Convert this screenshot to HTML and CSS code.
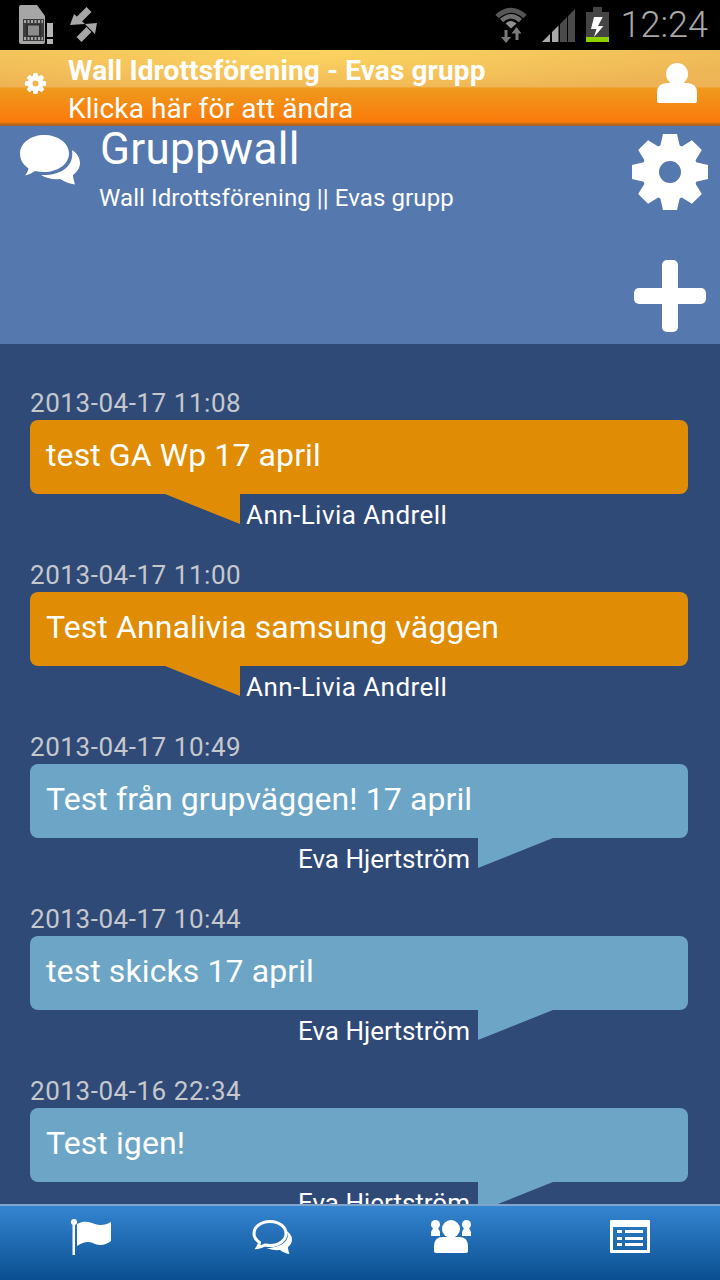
FILE: index.html
```html
<!DOCTYPE html>
<html lang="en">

<head>
  <meta charset="UTF-8" />
  <title>Gruppwall</title>
  <link rel="stylesheet" href="styles.css">
</head>

<body>
  <svg class="defs" width="0" height="0">
    <symbol id="gear" viewBox="-38 -38 76 76">
      <circle r="19.5" fill="none" stroke="#fff" stroke-width="17" />
      <g fill="#fff">
        <path id="tooth" d="M-7 -38H7L10 -25H-10Z" />
        <use href="#tooth" transform="rotate(45)" />
        <use href="#tooth" transform="rotate(90)" />
        <use href="#tooth" transform="rotate(135)" />
        <use href="#tooth" transform="rotate(180)" />
        <use href="#tooth" transform="rotate(225)" />
        <use href="#tooth" transform="rotate(270)" />
        <use href="#tooth" transform="rotate(315)" />
      </g>
    </symbol>
  </svg>

  <div class="status-bar">
    <svg class="ic-sim" viewBox="19 5 34 39">
      <path d="M21 5H37L45 16V42Q45 44 43 44H21Q19 44 19 42V7Q19 5 21 5Z" fill="#a6a6a6" />
      <rect x="23" y="19" width="21" height="22" fill="#3c3c3c" />
      <path d="M24 21.500H43M24 38.500H43" stroke="#a6a6a6" stroke-width="3" stroke-dasharray="2 1.500" fill="none" />
      <rect x="26" y="24" width="15" height="13" fill="#2e2e2e" />
      <rect x="28" y="25.500" width="11" height="10" fill="#8c8c8c" />
      <rect x="47" y="23" width="6" height="14" fill="#b5b5b5" />
      <rect x="47" y="39" width="6" height="5" fill="#b5b5b5" />
    </svg>
    <svg class="ic-sync" viewBox="70 6 28 36">
      <path d="M89 9.500L79 19.500M79 39.500L89 29.500" stroke="#a6a6a6" stroke-width="7" fill="none" />
      <path d="M70 25L74 14L85 24ZM97 23L85 24L95 34Z" fill="#a6a6a6" />
    </svg>
    <span class="spacer"></span>
    <svg class="ic-wifi" viewBox="495 7 32 37">
      <path d="M497 16.500Q511 4 525 16.500" stroke="#555" stroke-width="5" fill="none" />
      <path d="M501.500 20.500Q511 12 520.500 20.500" stroke="#6f6f6f" stroke-width="4.500" fill="none" />
      <path d="M505.500 23.500Q511 18.500 516.500 23.500L511 28.500Z" fill="#8e8e8e" />
      <path d="M504.500 30V37H501L506 43L511 37H507.500V30ZM515.500 40V33.500H511.500L516.500 27L521.500 33.500H518.500V40Z" fill="#7a7a7a" />
    </svg>
    <svg class="ic-signal" viewBox="542 9 33 33">
      <path d="M542 42L550 34V42ZM552 32V42H558.500V25.500Z" fill="#a8a8a8" />
      <path d="M560 24V42H567V17ZM568 16V42H575V9Z" fill="#4a4a4a" />
    </svg>
    <svg class="ic-batt" viewBox="586 7 23 35">
      <rect x="593" y="7" width="9" height="5" fill="#444" />
      <rect x="586" y="12" width="23" height="25" fill="#444" />
      <rect x="586" y="37" width="23" height="5" fill="#8fd000" />
      <path d="M594 17H602.700L598 26H603.500L594 37L596.500 29H591Z" fill="#fff" />
    </svg>
    <span class="clock">12:24</span>
  </div>

  <div class="notif-bar">
    <svg class="ic-notif-gear"><use href="#gear" /></svg>
    <div class="notif-text">
      <div class="notif-title">Wall Idrottsförening - Evas grupp</div>
      <div class="notif-sub">Klicka här för att ändra</div>
    </div>
    <svg class="ic-user" viewBox="657 63 40 40">
      <circle cx="677" cy="74" r="11" fill="#fff" />
      <path d="M667 83H687Q697 83 697 93V101Q697 103 695 103H659Q657 103 657 101V93Q657 83 667 83Z" fill="#fff" />
    </svg>
  </div>

  <div class="header">
    <svg class="ic-chat" viewBox="20 135 60 50">
      <path d="M44 135C58 135 69 143 69 153.500C69 164 58 172 44 172C41 172 38 171.700 35 171C32 173 29 175 25 175.500C27 173 28 171 28.500 168.500C23.500 165 20 160 20 153.500C20 143 31 135 44 135Z" fill="#fff" />
      <path d="M72 150C77 153 80 158 80 163C80 168 77 172 73 175C73 178 74 181 75 184.500C70 184 65 182 60 179C53 180 46 178 41 175C55 176 75 170 72 150Z" fill="#fff" />
    </svg>
    <div class="header-text">
      <h1>Gruppwall</h1>
      <p>Wall Idrottsförening || Evas grupp</p>
    </div>
    <div class="header-actions">
      <svg class="ic-gear"><use href="#gear" /></svg>
      <svg class="ic-plus" viewBox="0 0 72 72">
        <rect x="28" y="0" width="16" height="72" rx="5" fill="#fff" />
        <rect x="0" y="28" width="72" height="16" rx="5" fill="#fff" />
      </svg>
    </div>
  </div>

  <div class="wall">
    <div class="post mine">
      <div class="post-date">2013-04-17 11:08</div>
      <div class="bubble">test GA Wp 17 april</div>
      <div class="author">Ann-Livia Andrell</div>
    </div>
    <div class="post mine">
      <div class="post-date">2013-04-17 11:00</div>
      <div class="bubble">Test Annalivia samsung väggen</div>
      <div class="author">Ann-Livia Andrell</div>
    </div>
    <div class="post other">
      <div class="post-date">2013-04-17 10:49</div>
      <div class="bubble">Test från grupväggen! 17 april</div>
      <div class="author">Eva Hjertström</div>
    </div>
    <div class="post other">
      <div class="post-date">2013-04-17 10:44</div>
      <div class="bubble">test skicks 17 april</div>
      <div class="author">Eva Hjertström</div>
    </div>
    <div class="post other">
      <div class="post-date">2013-04-16 22:34</div>
      <div class="bubble">Test igen!</div>
      <div class="author">Eva Hjertström</div>
    </div>
  </div>

  <div class="tabs">
    <div class="tab">
      <svg class="ic-tab ic-flag" viewBox="71 1219 41 37">
        <circle cx="74" cy="1222" r="3" fill="#fff" />
        <rect x="72.500" y="1222" width="2.500" height="33" fill="#fff" />
        <path d="M77 1224C84 1220 90 1222 95 1224C100 1226 106 1225 111 1222V1241C106 1245 100 1246 95 1244C90 1241 84 1241 77 1246Z" fill="#fff" />
      </svg>
    </div>
    <div class="tab">
      <svg class="ic-tab" viewBox="252 1219 41 37">
        <path d="M270 1221.500C279 1221.500 286 1227 286 1233.500C286 1240 279 1245.500 270 1245.500C268 1245.500 266.500 1245.300 265 1245C262.500 1246.500 260 1247.300 257.500 1247.500C258.500 1246 259.300 1244 259.500 1242.500C256 1240 254 1237 254 1233.500C254 1227 261 1221.500 270 1221.500Z" fill="none" stroke="#fff" stroke-width="3" />
        <path d="M286.500 1231C290 1233 292 1236 292 1239.500C292 1242.500 290.500 1245 288 1247C288 1249 288.500 1251.500 289.500 1254C286 1253.500 282.500 1252 280 1250C275 1250.500 270 1249.500 266.500 1248C278 1248 292 1242 286.500 1231Z" fill="#fff" />
      </svg>
    </div>
    <div class="tab">
      <svg class="ic-tab" viewBox="431 1219 41 37">
        <circle cx="451" cy="1229" r="9" fill="#fff" />
        <path d="M443 1237H459Q468 1237 468 1246V1251Q468 1253 466 1253H436Q434 1253 434 1251V1246Q434 1237 443 1237Z" fill="#fff" />
        <circle cx="435.500" cy="1224.500" r="4.500" fill="#fff" />
        <path d="M433 1228H438L440 1232V1236H431V1232Z" fill="#fff" />
        <circle cx="466.500" cy="1224.500" r="4.500" fill="#fff" />
        <path d="M464 1228H469L471 1232V1236H462V1232Z" fill="#fff" />
      </svg>
    </div>
    <div class="tab">
      <svg class="ic-tab" viewBox="610 1219 41 37">
        <path fill-rule="evenodd" d="M611 1220H649Q650 1220 650 1221V1252Q650 1253 649 1253H611Q610 1253 610 1252V1221Q610 1220 611 1220ZM613 1227V1250H647V1227Z" fill="#fff" />
        <path d="M617 1230H622V1233H617ZM625 1230H643V1233H625ZM617 1237H622V1240H617ZM625 1237H643V1240H625ZM617 1243H622V1246H617ZM625 1243H643V1246H625Z" fill="#fff" />
      </svg>
    </div>
  </div>
</body>

</html>
```

FILE: styles.css
```css
* {
  box-sizing: border-box;
  margin: 0;
  padding: 0;
}

body {
  font-family: Roboto, sans-serif;
  background: #304a77;
  color: #fff;
  width: 720px;
  height: 1280px;
  overflow: hidden;
  display: flex;
  flex-direction: column;
}

svg {
  display: block;
  flex: none;
}

.defs {
  position: absolute;
}

/* phone status bar */
.status-bar {
  height: 50px;
  flex: none;
  background: #000;
  display: flex;
  align-items: flex-start;
}

.spacer {
  flex: 1;
}

.ic-sim {
  width: 34px;
  height: 39px;
  margin: 5px 0 0 19px;
}

.ic-sync {
  width: 28px;
  height: 36px;
  margin: 6px 0 0 17px;
}

.ic-wifi {
  width: 32px;
  height: 37px;
  margin-top: 7px;
}

.ic-signal {
  width: 33px;
  height: 33px;
  margin: 9px 0 0 15px;
}

.ic-batt {
  width: 23px;
  height: 35px;
  margin: 7px 0 0 11px;
}

.clock {
  font-size: 36px;
  font-weight: 300;
  line-height: 50px;
  color: #a8a8a8;
  margin: 0 12px 0 12px;
}

/* orange group chooser */
.notif-bar {
  height: 76px;
  flex: none;
  display: flex;
  align-items: center;
  background:
    radial-gradient(ellipse 62% 130% at 42% 0, #fdd460, rgba(253, 212, 96, 0)) 0 0 / 100% 37px no-repeat,
    linear-gradient(to bottom, #eebb58 0, #eeb254 37px, #ee9a1d 38px, #fb7a0a 72px, #a86420 75px, #a86420 100%);
}

.ic-notif-gear {
  width: 21px;
  height: 21px;
  margin: 0 23px 10px 25px;
}

.notif-text {
  flex: 1;
  margin-left: -1px;
  padding-top: 4px;
}

.notif-title {
  font-size: 28px;
  font-weight: 700;
  letter-spacing: .12px;
  line-height: 38px;
}

.notif-sub {
  font-size: 28px;
  letter-spacing: .12px;
  line-height: 38px;
}

.ic-user {
  width: 40px;
  height: 40px;
  margin: 0 23px 10px 0;
}

/* page header */
.header {
  height: 218px;
  flex: none;
  background: #5579ae;
  display: flex;
  align-items: flex-start;
}

.ic-chat {
  width: 60px;
  height: 50px;
  margin: 9px 0 0 20px;
}

.header-text {
  flex: 1;
  margin-left: 20px;
}

.header-text h1 {
  font-size: 44px;
  font-weight: 400;
  letter-spacing: .3px;
  line-height: 46px;
}

.header-text p {
  font-size: 24px;
  letter-spacing: .1px;
  line-height: 32px;
  margin: 10px 0 0 -1px;
}

.header-actions {
  display: flex;
  flex-direction: column;
  align-items: center;
  margin: 8px 12px 0 0;
  gap: 50px;
}

.ic-gear {
  width: 76px;
  height: 76px;
}

.ic-plus {
  width: 72px;
  height: 72px;
}

/* posts */
.wall {
  flex: 1;
  min-height: 0;
  overflow: hidden;
  padding: 44px 32px 0 30px;
}

.post {
  margin-bottom: 34px;
}

.post-date {
  font-size: 26px;
  letter-spacing: .55px;
  line-height: 30px;
  padding-bottom: 2px;
  color: #c5c8cd;
}

.bubble {
  position: relative;
  height: 74px;
  border-radius: 8px;
  font-size: 32px;
  letter-spacing: .1px;
  line-height: 70px;
  padding-left: 16px;
}

.bubble::after {
  content: "";
  position: absolute;
  top: 100%;
  width: 75px;
  height: 30px;
}

.mine .bubble {
  background: #e08c05;
}

.mine .bubble::after {
  left: 135px;
  background: #e08c05;
  clip-path: polygon(0 0, 100% 0, 100% 100%);
}

.other .bubble {
  background: #6ca5c6;
}

.other .bubble::after {
  left: 448px;
  background: #6ca5c6;
  clip-path: polygon(0 0, 100% 0, 0 100%);
}

.author {
  font-size: 26px;
  line-height: 32px;
  padding-top: 5px;
  height: 32px;
}

.mine .author {
  padding-left: 216px;
  letter-spacing: .45px;
}

.other .author {
  text-align: right;
  padding-right: 218px;
}

/* bottom tabs */
.tabs {
  height: 76px;
  flex: none;
  display: flex;
  padding-left: 4px;
  border-top: 2px solid #7fa5cc;
  background: linear-gradient(to bottom, #3585d1, #0a4f90);
}

.tab {
  flex: 1;
  display: flex;
  justify-content: center;
  padding-top: 13px;
}

.ic-tab {
  width: 41px;
  height: 37px;
}

.ic-flag {
  margin-right: 4px;
}
```
